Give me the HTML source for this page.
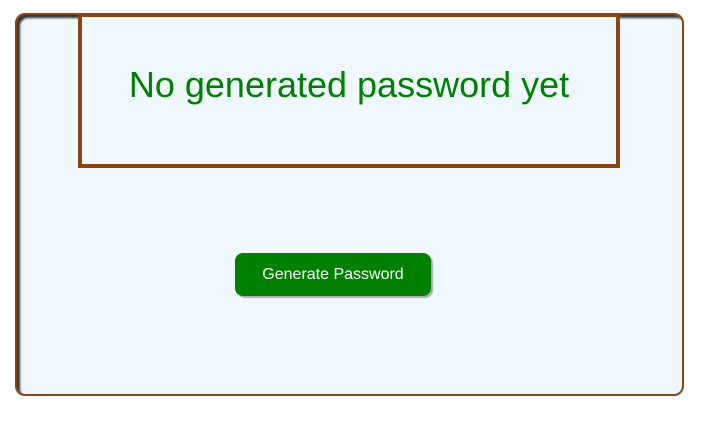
<!DOCTYPE html>
<html><head><style>
body{margin:0;width:707px;height:422px;background:#fff;position:relative;font-family:"Liberation Sans",sans-serif;}
.card{position:absolute;left:15px;top:13px;width:665px;height:379px;border:2px solid #8B4513;border-radius:10px;background:#f0f8ff;box-shadow:inset 3px 3px 2px rgba(0,0,0,.8);}
.box{position:absolute;left:78px;top:13px;width:534px;height:147px;border:4px solid #8B4513;background:#f0f8ff;display:flex;align-items:center;justify-content:center;}
.box span{color:#008000;font-size:36px;margin-top:-12px;}
.btn{position:absolute;left:235px;top:253px;width:196px;height:43px;background:#008000;border-radius:8px;color:#fff;font-size:16px;display:flex;align-items:center;justify-content:center;box-shadow:2px 2px 1px #aaa;}
</style></head><body>
<div class="card"></div>
<div class="box"><span>No generated password yet</span></div>
<div class="btn">Generate Password</div>
</body></html>
